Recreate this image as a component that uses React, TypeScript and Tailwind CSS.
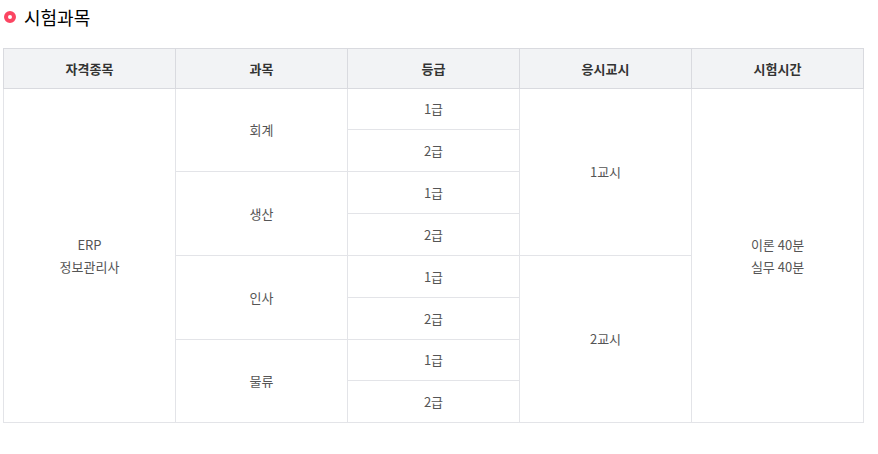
import React from "react";

const font = { fontFamily: '"Noto Sans CJK KR", "Noto Sans", sans-serif' };

export default function App() {
  const th =
    "h-[40px] border border-[#d9dadf] bg-[#f2f3f5] text-[13px] font-bold text-[#333] text-center align-middle p-0";
  const td = "border border-[#e3e4e8] text-[13px] text-[#555] text-center align-middle p-0 leading-[22px]";
  return (
    <div className="w-[878px] h-[454px] bg-white" style={font}>
      <div className="flex items-center pt-[4px] pl-[4px] h-[30px]">
        <span className="w-[12px] h-[12px] rounded-full border-[4px] border-[#fb4562] bg-white"></span>
        <span className="ml-[8px] text-[18px] font-normal text-[#000] leading-[24px]">시험과목</span>
      </div>
      <div className="pl-[3px] pt-[18px]">
        <table className="border-collapse w-[861px] table-fixed">
          <thead>
            <tr>
              <th className={th}>자격종목</th>
              <th className={th}>과목</th>
              <th className={th}>등급</th>
              <th className={th}>응시교시</th>
              <th className={th}>시험시간</th>
            </tr>
          </thead>
          <tbody>
            <tr className="h-[41px]">
              <td className={td} rowSpan={8}>
                ERP
                <br />
                정보관리사
              </td>
              <td className={td} rowSpan={2}>회계</td>
              <td className={td}>1급</td>
              <td className={td} rowSpan={4}>1교시</td>
              <td className={td} rowSpan={8}>
                이론 40분
                <br />
                실무 40분
              </td>
            </tr>
            <tr className="h-[42px]">
              <td className={td}>2급</td>
            </tr>
            <tr className="h-[42px]">
              <td className={td} rowSpan={2}>생산</td>
              <td className={td}>1급</td>
            </tr>
            <tr className="h-[42px]">
              <td className={td}>2급</td>
            </tr>
            <tr className="h-[42px]">
              <td className={td} rowSpan={2}>인사</td>
              <td className={td}>1급</td>
              <td className={td} rowSpan={4}>2교시</td>
            </tr>
            <tr className="h-[42px]">
              <td className={td}>2급</td>
            </tr>
            <tr className="h-[41px]">
              <td className={td} rowSpan={2}>물류</td>
              <td className={td}>1급</td>
            </tr>
            <tr className="h-[42px]">
              <td className={td}>2급</td>
            </tr>
          </tbody>
        </table>
      </div>
    </div>
  );
}
